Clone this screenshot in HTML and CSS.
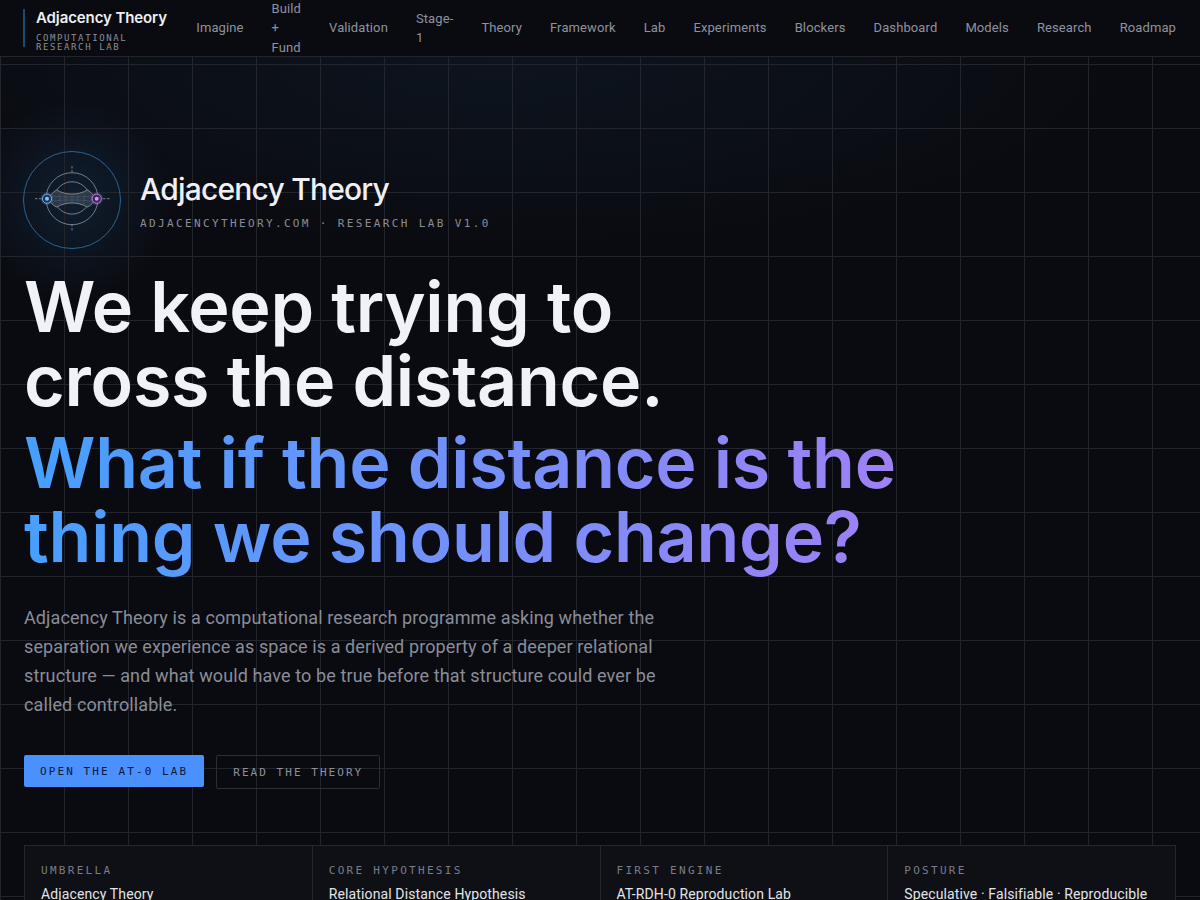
FILE: index.html
```html
<!DOCTYPE html>
<html lang="en">
<head>
    <meta charset="UTF-8">
    <meta name="viewport" content="width=device-width, initial-scale=1.0">
    <title>Adjacency Theory</title>
    <link rel="stylesheet" href="styles.css">
</head>
<body>

<!-- top nav -->
<nav class="topbar">
    <a class="brand" href="#">
        <span class="brand-name">Adjacency Theory</span>
        <span class="brand-sub">Computational<br>Research Lab</span>
    </a>
    <div class="nav-links">
        <a href="#">Imagine</a>
        <a href="#">Build<br>+<br>Fund</a>
        <a href="#">Validation</a>
        <a href="#">Stage-<br>1</a>
        <a href="#">Theory</a>
        <a href="#">Framework</a>
        <a href="#">Lab</a>
        <a href="#">Experiments</a>
        <a href="#">Blockers</a>
        <a href="#">Dashboard</a>
        <a href="#">Models</a>
        <a href="#">Research</a>
        <a href="#">Roadmap</a>
    </div>
</nav>

<main class="hero">
    <div class="hero-brand">
        <svg class="hero-logo" viewBox="1 1 98 98" width="98" height="98" fill="none">
            <circle cx="50" cy="50" r="48.500" stroke="#2b6394" stroke-width="1"/>
            <g stroke="#8a94a1" stroke-width="0.8">
                <circle cx="50" cy="48.700" r="26"/>
                <path d="M34.700 40 A18.300 18.300 0 0 1 65.300 40"/>
                <path d="M35.500 57 A18.300 18.300 0 0 0 64.500 57"/>
            </g>
            <!-- ticks on the axes -->
            <g stroke="#8f98a4" stroke-width="0.8" stroke-dasharray="2.500 1.500">
                <path d="M50 16V24"/>
                <path d="M50 74V82"/>
                <path d="M13 48.700H20"/>
                <path d="M81 48.700H88"/>
            </g>
            <!-- throat between the two nodes -->
            <path d="M25 48.700 C29 46 31 41 34.700 40 C40 43 45 44 50 44 C55 44 60 43 65.300 40 C69 41 71 46 74.700 48.700 C71 52 69 56 65.300 57 C60 54 55 53 50 53 C45 53 40 54 34.700 57 C31 56 29 52 25 48.700Z" fill="#9aa2b6" fill-opacity="0.22" stroke="#b4bbc7" stroke-width="0.6"/>
            <path d="M30 46 C40 47 45 47 50 47 C55 47 60 47 69 46 M30 51 C40 50 45 50 50 50 C55 50 60 50 69 51 M38 43V54 M44 45V52 M50 45V52 M56 45V52 M62 43V54" stroke="#aab2c0" stroke-width="0.3" stroke-opacity="0.5"/>
            <circle cx="25" cy="48.700" r="6.500" fill="#4a90d0" fill-opacity="0.25"/>
            <circle cx="25" cy="48.700" r="4.600" fill="#1b3554" stroke="#82b4e4" stroke-width="1"/>
            <circle cx="25" cy="48.700" r="2" fill="#7cc6ff"/>
            <circle cx="74.700" cy="48.700" r="6.500" fill="#a060d0" fill-opacity="0.25"/>
            <circle cx="74.700" cy="48.700" r="4.600" fill="#3a2554" stroke="#b48ad8" stroke-width="1"/>
            <circle cx="74.700" cy="48.700" r="2" fill="#d892f5"/>
        </svg>
        <div class="hero-brand-text">
            <div class="hero-brand-name">Adjacency Theory</div>
            <div class="hero-brand-sub">adjacencytheory.com · Research Lab v1.0</div>
        </div>
    </div>

    <h1 class="headline">
        <span class="headline-white">We keep trying to<br>cross the distance.</span>
        <span class="headline-grad">What if the distance is the<br>thing we should change?</span>
    </h1>

    <p class="lead">Adjacency Theory is a computational research programme asking whether the separation we experience as space is a derived property of a deeper relational structure — and what would have to be true before that structure could ever be called controllable.</p>

    <div class="actions">
        <a class="btn btn-primary" href="#">Open the AT-0 Lab</a>
        <a class="btn btn-ghost" href="#">Read the Theory</a>
    </div>

    <div class="facts">
        <div class="fact">
            <div class="fact-label">Umbrella</div>
            <div class="fact-value">Adjacency Theory</div>
        </div>
        <div class="fact">
            <div class="fact-label">Core Hypothesis</div>
            <div class="fact-value">Relational Distance Hypothesis</div>
        </div>
        <div class="fact">
            <div class="fact-label">First Engine</div>
            <div class="fact-value">AT-RDH-0 Reproduction Lab</div>
        </div>
        <div class="fact">
            <div class="fact-label">Posture</div>
            <div class="fact-value">Speculative · Falsifiable · Reproducible</div>
        </div>
    </div>
</main>

</body>
</html>
```

FILE: styles.css
```css
* {
    margin: 0;
    padding: 0;
    box-sizing: border-box;
}

html, body {
    height: 100%;
    overflow: hidden;
}

body {
    background-color: #0a0b10;
    /* soft blue wash under the nav and behind the logo, then the 64px grid */
    background-image:
        linear-gradient(#22252c 1px, transparent 1px),
        linear-gradient(90deg, #22252c 1px, transparent 1px),
        radial-gradient(circle at 72px 200px, rgba(30, 80, 130, 0.28), transparent 100px),
        radial-gradient(ellipse 620px 190px at 500px 60px, rgba(30, 70, 110, 0.16), transparent);
    background-size: 64px 64px, 64px 64px, auto, auto;
    color: #f0f2f7;
    font-family: Roboto, sans-serif;
}

a {
    color: inherit;
    text-decoration: none;
}

/* Top nav */
.topbar {
    height: 57px;
    display: flex;
    align-items: center;
    justify-content: space-between;
    padding: 0 24px;
    background-color: #0a0b10;
    border-bottom: 1px solid #22252c;
}

.brand {
    display: flex;
    flex-direction: column;
    gap: 8px;
    padding-left: 11px;
    border-left: 2px solid #1e4a72;
    height: 38px;
    margin-left: -1px;
}

.brand-name {
    font-family: Inter, sans-serif;
    font-weight: 600;
    font-size: 15px;
    line-height: 17px;
    letter-spacing: -0.1px;
    color: #eef0f5;
}

.brand-sub {
    font-family: "DejaVu Sans Mono", monospace;
    font-size: 9px;
    line-height: 9px;
    letter-spacing: 1.6px;
    text-transform: uppercase;
    color: #8b8e99;
}

.nav-links {
    display: flex;
    align-items: center;
    gap: 28px;
    font-size: 13px;
    line-height: 19.5px;
    letter-spacing: 0.11px;
    color: #8f929e;
}

/* Hero */
.hero {
    padding: 94px 24px 0;
}

.hero-brand {
    display: flex;
    align-items: center;
    gap: 19px;
}

.hero-logo {
    display: block;
    flex: none;
    margin-left: -1px;
}

.hero-brand-text {
    padding-top: 2px;
}

.hero-brand-name {
    font-family: Inter, sans-serif;
    font-weight: 500;
    font-size: 30px;
    line-height: 36px;
    letter-spacing: -0.8px;
    color: #eef0f5;
}

.hero-brand-sub {
    margin-top: 10px;
    font-family: "DejaVu Sans Mono", monospace;
    font-size: 11px;
    line-height: 14px;
    letter-spacing: 2.37px;
    text-transform: uppercase;
    color: #8a8d96;
}

.headline {
    margin-top: 21px;
    font-family: Inter, sans-serif;
    font-weight: 600;
    font-size: 70px;
    line-height: 74px;
    letter-spacing: -0.25px;
}

.headline-white {
    display: block;
    color: #f0f2f7;
}

.headline-grad {
    display: block;
    width: fit-content;
    margin-top: 8px;
    padding-bottom: 5px; /* keeps the descenders inside the clipped gradient */
    background: linear-gradient(100deg, #45a0ff, #a080f5);
    -webkit-background-clip: text;
    background-clip: text;
    color: transparent;
}

.lead {
    margin-top: 24px;
    max-width: 640px;
    font-size: 18px;
    font-weight: 400;
    line-height: 29px;
    letter-spacing: 0.11px;
    color: #8a8d98;
}

.actions {
    display: flex;
    align-items: flex-start;
    gap: 12px;
    margin-top: 36px;
}

.btn {
    display: block;
    padding: 0 16px;
    height: 32px;
    font-family: "DejaVu Sans Mono", monospace;
    font-size: 11px;
    line-height: 33px;
    letter-spacing: 2.1px;
    text-transform: uppercase;
    border-radius: 2px;
}

.btn-primary {
    background-color: #4a90ff;
    color: #0a1838;
}

.btn-ghost {
    height: 34px;
    letter-spacing: 2.04px;
    border: 1px solid #2c2e35;
    color: #8d909a;
}

/* Facts strip along the bottom, the 1px gaps show as dividers */
.facts {
    display: grid;
    grid-template-columns: repeat(4, 1fr);
    gap: 1px;
    margin-top: 56px;
    background-color: #25272d;
    border: 1px solid #25272d;
}

.fact {
    padding: 18px 16px 16px;
    background-color: #0f1015;
}

.fact-label {
    font-family: "DejaVu Sans Mono", monospace;
    font-size: 11px;
    line-height: 14px;
    letter-spacing: 2.3px;
    text-transform: uppercase;
    color: #7a7d88;
}

.fact-value {
    margin-top: 6px;
    font-size: 14px;
    line-height: 20px;
    letter-spacing: 0.12px;
    color: #e2e4ea;
}
```
